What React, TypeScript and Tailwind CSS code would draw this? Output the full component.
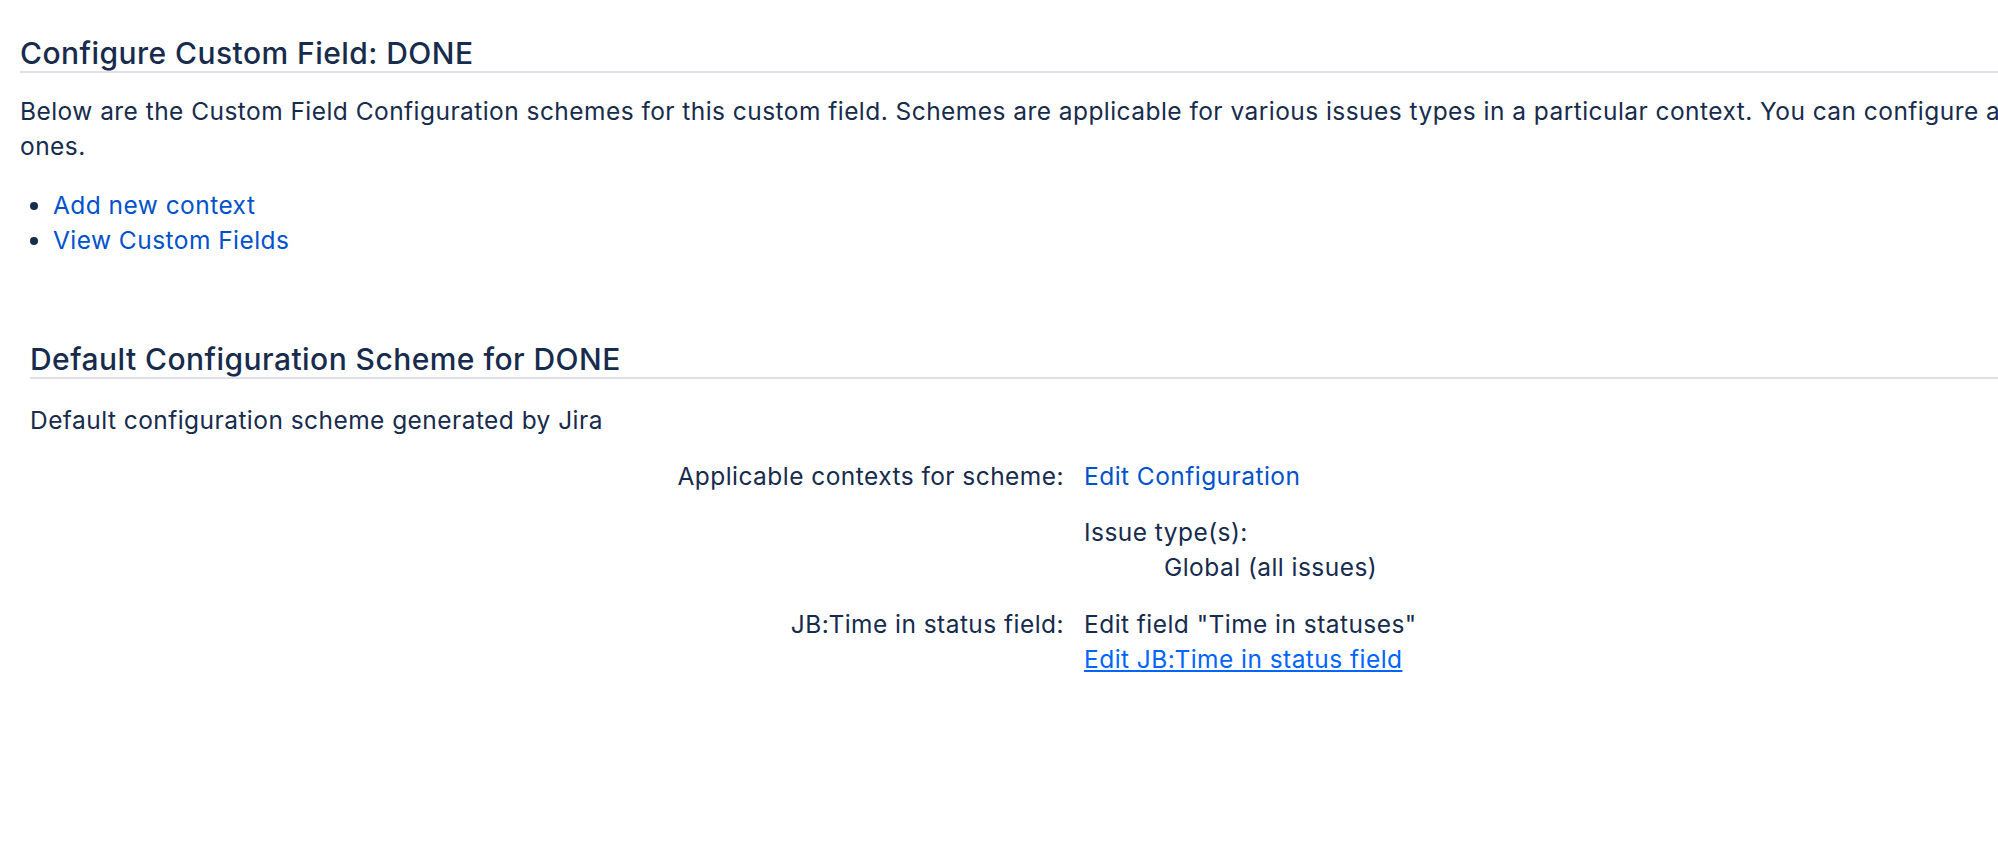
import React from 'react'

const Link = ({ children, className = '' }: { children: React.ReactNode; className?: string }) => (
  <a href="#" className={`text-[#0052cc] no-underline ${className}`}>
    {children}
  </a>
)

const App = () => {
  return (
    <div className="min-h-screen w-full overflow-hidden bg-white font-['Inter','Liberation_Sans',sans-serif] text-[24.5px] leading-[35px] tracking-[0.45px] text-[#172b4d]">
      <div className="pl-5">
        <h1 className="mt-[35px] border-b-2 border-[#dfe1e6] text-[30px] leading-[36px] font-medium tracking-[0.45px]">
          Configure Custom Field: DONE
        </h1>
        <p className="mt-[21px] whitespace-nowrap">
          Below are the Custom Field Configuration schemes for this custom field. Schemes are applicable for various issues types in a particular context. You can configure any of the existing schemes or add new
          <br />
          ones.
        </p>
        <ul className="mt-6 list-disc pl-[33px]">
          <li>
            <Link>Add new context</Link>
          </li>
          <li>
            <Link>View Custom Fields</Link>
          </li>
        </ul>

        <section className="mt-[83px] pl-[10px]">
          <h2 className="border-b-2 border-[#dfe1e6] text-[30px] leading-[36px] font-medium tracking-[0.45px]">
            Default Configuration Scheme for DONE
          </h2>
          <p className="mt-6">Default configuration scheme generated by Jira</p>

          <div className="mt-[21px] grid grid-cols-[1034px_1fr] gap-x-5 gap-y-[22px]">
            <div className="text-right">Applicable contexts for scheme:</div>
            <div>
              <Link>Edit Configuration</Link>
              <div className="mt-[21px]">
                <div>Issue type(s):</div>
                <div className="pl-20">Global (all issues)</div>
              </div>
            </div>

            <div className="text-right">JB:Time in status field:</div>
            <div>
              <div>Edit field "Time in statuses"</div>
              <Link className="!text-[#0065ff] underline">Edit JB:Time in status field</Link>
            </div>
          </div>
        </section>
      </div>
    </div>
  )
}

export default App
